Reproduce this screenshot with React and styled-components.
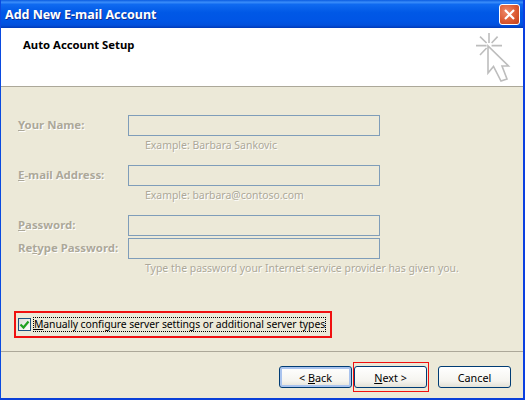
import React from "react";
import styled, { createGlobalStyle } from "styled-components";

const Global = createGlobalStyle`
  html, body { margin: 0; padding: 0; background: #ece9d8; }
  * { box-sizing: border-box; }
`;
const FONT = `"Noto Sans", Tahoma, sans-serif`;

const Win = styled.div`
  width: 525px; height: 400px; display: flex; flex-direction: column;
  background: #ece9d8; font-family: ${FONT}; font-size: 11px; color: #000;
  border-left: 1px solid #0a4ae0; border-right: 2px solid #0a3fe0; border-bottom: 2px solid #0a3fd8;
  overflow: hidden;
`;
const TitleBar = styled.div`
  height: 28px; margin: 0 -2px 0 -1px; flex: none; display: flex; align-items: center; justify-content: space-between;
  padding: 0 5px 0 5px;
  background: linear-gradient(180deg, #0a5be0 0%, #3a8dfa 8%, #0f6af0 16%, #0058e6 45%, #0055e5 75%, #0250dc 90%, #0039b8 100%);
`;
const TitleText = styled.div`
  color: #fff; font-weight: 700; font-size: 12.5px; text-shadow: 1px 1px 0 #0f2f90;
`;
const Close = styled.div`
  width: 21px; height: 21px; border: 1px solid #fff; border-radius: 3px;
  background: radial-gradient(circle at 35% 35%, #ee8a6a 0%, #dc5a32 55%, #c2401a 100%);
  display: flex; align-items: center; justify-content: center;
`;
const Header = styled.div`
  height: 59px; flex: none; background: #fff; border-bottom: 1px solid #aca899;
  display: flex; justify-content: space-between; padding: 10px 0 0 22px;
`;
const HeaderTitle = styled.div`
  font-weight: 700; font-size: 11.3px; line-height: 14px;
`;
const Wizard = styled.svg`
  width: 40px; height: 54px; margin: -8px 11px 0 0; flex: none; align-self: flex-start;
`;
const Body = styled.div`
  flex: 1; display: flex; flex-direction: column; padding: 28px 0 0 17px; min-height: 0;
`;
const Row = styled.div`
  display: flex; align-items: center; height: 21px; margin-top: ${p => p.$gap || 0}px;
`;
const Label = styled.div`
  width: 110px; font-weight: 700; font-size: 11.4px; line-height: 14px; padding-bottom: 2px; color: #aca899; text-shadow: 1px 1px 0 #fff; white-space: nowrap;
  u { text-underline-offset: 1px; }
`;
const Input = styled.div`
  width: 252px; height: 21px; border: 1px solid #7f9db9; background: #ece9d8;
`;
const Hint = styled.div`
  margin: 2px 0 0 127px; height: 15px; line-height: 14px; font-size: 10.45px; color: #aca899; text-shadow: 1px 1px 0 #fff; white-space: nowrap;
`;
const CheckFrame = styled.div`
  display: inline-flex; align-self: flex-start; align-items: center; gap: 2px;
  margin-left: -4px; margin-top: 35px; height: 27px; width: 318px;
  border: 2px solid #f01010; padding-left: 2px;
`;
const Box = styled.div`
  width: 13px; height: 13px; flex: none; border: 1px solid #1c5180; background: linear-gradient(135deg, #dcdcd7, #fff);
  display: flex; align-items: center; justify-content: center;
`;
const CheckLabel = styled.div`
  border: 1px dotted #000; height: 15px; line-height: 13px; width: 293px; white-space: nowrap; font-size: 10.4px; letter-spacing: -0.08px;
`;
const Footer = styled.div`
  height: 47px; flex: none; border-top: 1px solid #aca899; display: flex; align-items: flex-start; padding: 14px 0 0 278px;
`;
const Btn = styled.div`
  position: relative; width: 73px; height: 22px; margin-right: ${p => p.$mr || 0}px; flex: none;
  border: 1px solid #003c74; border-radius: 3px; display: flex; align-items: center; justify-content: center;
  background: linear-gradient(180deg, #fff 0%, #f5f4ef 70%, #e3e1d6 100%);
  font-size: 10.8px; white-space: pre;
  box-shadow: ${p => p.$def ? "inset 0 0 0 2px #a9c3ee" : "none"};
  u { text-underline-offset: 1px; }
`;
const RedBox = styled.div`
  position: absolute; left: -2px; top: -5px; width: 76px; height: 30px; border: 1px solid #f01010;
`;

export default function App() {
  return (
    <Win>
      <Global />
      <TitleBar>
        <TitleText>Add New E-mail Account</TitleText>
        <Close>
          <svg width="13" height="13" viewBox="0 0 13 13"><path d="M2 2l9 9M11 2l-9 9" stroke="#fff" strokeWidth="2.2" /></svg>
        </Close>
      </TitleBar>
      <Header>
        <HeaderTitle>Auto Account Setup</HeaderTitle>
        <Wizard viewBox="0 0 40 54">
          <g stroke="#bdbdbd" strokeWidth="1.6" fill="none">
            <path d="M4 15.6h10.6M19.6 15.6H30M17 3v10M8 6.6l6.6 6.4M25.6 6.6l-6 6.4M8 25l6.6-7" />
            <path d="M16 16v27l5.5-6.5L29 51l6-2-5-13h6.5z" fill="#fff" />
          </g>
        </Wizard>
      </Header>
      <Body>
        <Row><Label><u>Y</u>our Name:</Label><Input /></Row>
        <Hint>Example: Barbara Sankovic</Hint>
        <Row $gap={12}><Label><u>E</u>-mail Address:</Label><Input /></Row>
        <Hint>Example: barbara@contoso.com</Hint>
        <Row $gap={12}><Label><u>P</u>assword:</Label><Input /></Row>
        <Row $gap={2}><Label>Re<u>t</u>ype Password:</Label><Input /></Row>
        <Hint>Type the password your Internet service provider has given you.</Hint>
        <CheckFrame>
          <Box>
            <svg width="11" height="11" viewBox="0 0 11 11"><path d="M1.5 5.5l3 3 5-6" stroke="#21a121" strokeWidth="2.2" fill="none" /></svg>
          </Box>
          <CheckLabel><u>M</u>anually configure server settings or additional server types</CheckLabel>
        </CheckFrame>
      </Body>
      <Footer>
        <Btn $def $mr={2}>&lt; <u>B</u>ack</Btn>
        <Btn $mr={11}><u>N</u>ext &gt;<RedBox /></Btn>
        <Btn>Cancel</Btn>
      </Footer>
    </Win>
  );
}
